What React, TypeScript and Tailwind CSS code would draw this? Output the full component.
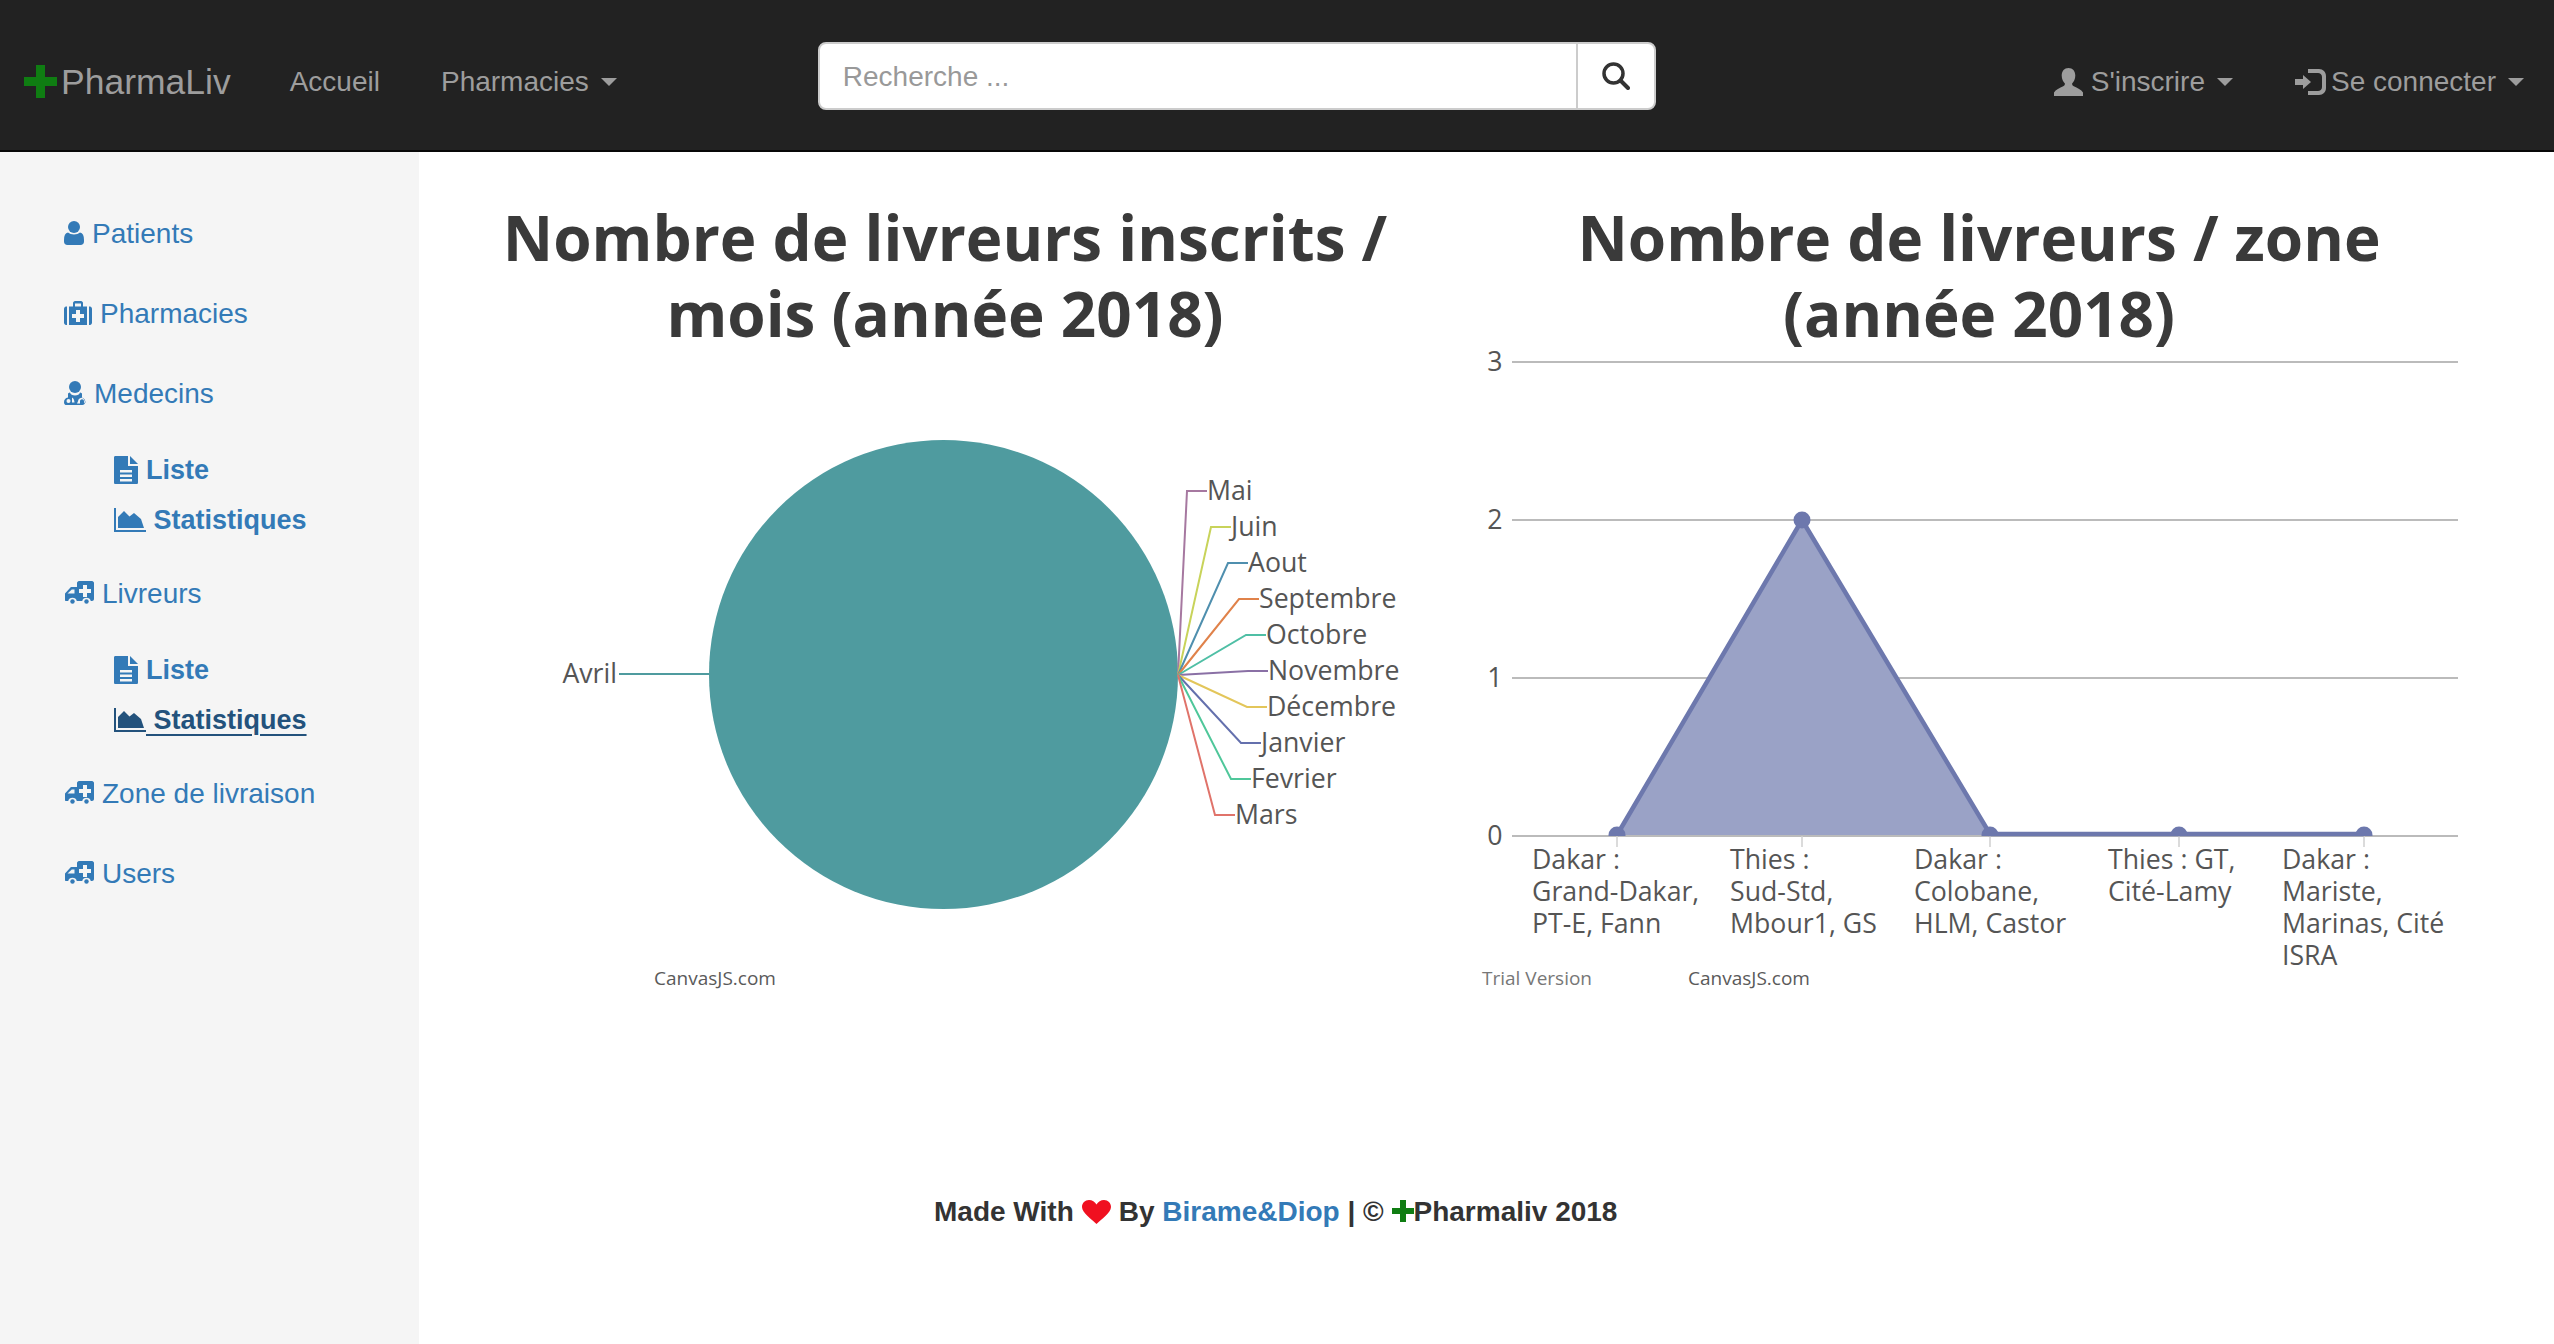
import React from "react";

const sans = "font-['Liberation_Sans',Arial,sans-serif]";
const chartFont = "'Open Sans', sans-serif";

const Caret = () => (
  <span className="ml-[12px] inline-block h-0 w-0 border-x-[8px] border-t-[8px] border-x-transparent border-t-[#9d9d9d]" />
);

const PlusIcon = ({ className }: { className: string }) => (
  <svg viewBox="0 0 33 33" className={className} fill="#0f7d12">
    <path d="M12 0h9v12h12v9H21v12h-9V21H0v-9h12z" />
  </svg>
);

const NavUserIcon = () => (
  <svg viewBox="0 0 29 28" className="h-[28px] w-[29px]" fill="#9d9d9d">
    <path d="M14.5 0c4.2 0 6.8 3 6.8 7.5 0 3.6-1.5 6.3-3.2 8 0 1.3.5 2.2 1.7 2.8 3.4 1.7 7.6 3.3 9.2 6.2V28H0v-3.500c1.600-2.900 5.800-4.500 9.200-6.200 1.200-.6 1.700-1.500 1.700-2.800-1.700-1.700-3.200-4.400-3.200-8C7.700 3 10.300 0 14.500 0z" />
  </svg>
);

const LoginIcon = () => (
  <svg viewBox="0 0 31 26" className="h-[26px] w-[31px]" fill="#9d9d9d">
    <path d="M8 6l8 7-8 7v-4H0v-6h8z" />
    <path d="M13 0h11c4 0 7 3 7 7v12c0 4-3 7-7 7H13v-4h10c2 0 4-1.500 4-4V8c0-2.500-2-4-4-4H13z" />
  </svg>
);

const SearchIcon = () => (
  <svg viewBox="0 0 28 28" className="h-[28px] w-[28px]" fill="none" stroke="#333">
    <circle cx="11.500" cy="11.500" r="9.500" strokeWidth="3.500" />
    <path d="M18.500 18.500L26 26" strokeWidth="4" strokeLinecap="round" />
  </svg>
);

const UserIcon = () => (
  <svg viewBox="0 0 20 24" className="h-[24px] w-[20px]" fill="currentColor">
    <circle cx="10" cy="6" r="6" />
    <path d="M4 11.500c1.500 1.300 3.600 2 6 2s4.500-.7 6-2c2.800.5 4 3 4 7.500v1.500c0 2-1.300 3.500-3.500 3.500h-13C1.300 24 0 22.500 0 20.500V19c0-4.500 1.200-7 4-7.500z" />
  </svg>
);

const MedkitIcon = () => (
  <svg viewBox="0 0 28 24" className="h-[24px] w-[28px]" fill="currentColor">
    <path d="M0 8c0-1.500 1-2.500 2-2.500h1V24H2c-1 0-2-1-2-2.500z" />
    <path d="M28 8c0-1.500-1-2.500-2-2.500h-1V24h1c1 0 2-1 2-2.500z" />
    <path
      fillRule="evenodd"
      d="M9 5.500V2c0-1 1-2 2-2h6c1 0 2 1 2 2v3.500h4V24H5V5.500zM11 2.500v3h6v-3zM12 9v4H8v4h4v4h4v-4h4v-4h-4V9z"
    />
  </svg>
);

const DoctorIcon = () => (
  <svg viewBox="0 0 22 24" className="h-[24px] w-[22px]" fill="currentColor">
    <circle cx="11" cy="6" r="6" />
    <path
      fillRule="evenodd"
      d="M4 12.500c.8-.6 1.500-.9 2-1 .4 2 2.500 3 5 3s4.600-1 5-3c.5.1 1.200.4 2 1v4.200c1.800 1 3 2.600 3 4.800 0 1.500-1.200 2.500-2.500 2.500h-17C1.200 24 0 23 0 21.500c0-2.800 1.200-4.500 4-5zM4.500 18a2 2 0 100 4 2 2 0 000-4zM13 22.500h3v-2.300c0-1 .6-2 2-2s2 1 2 2v1.500h1.500c0-2.500-1.500-5-3.500-5s-3.800 1.500-4 3.500zM8 16.500v5h2.500c-.2-2.500-.8-4-2.500-5z"
    />
  </svg>
);

const AmbulanceIcon = () => (
  <svg viewBox="0 0 29 24" className="ml-px h-[24px] w-[29px]" fill="currentColor">
    <path
      fillRule="evenodd"
      d="M12 2c0-1 1-2 2-2h13c1 0 2 1 2 2v16c0 1-1 2-2 2h-1.200a4.500 4.500 0 00-8.600 0H11.800a4.500 4.500 0 00-8.600 0H1c-.6 0-1-.4-1-1v-6.500L5 7c.5-.6 1-1 2-1h5zM18 4v4h-4v4h4v4h4v-4h4V8h-4V4zM9.500 8.500H6.800L2.500 12.500h7z"
    />
    <circle cx="7.500" cy="20.500" r="2.200" />
    <circle cx="21.500" cy="20.500" r="2.200" />
  </svg>
);

const FileIcon = () => (
  <svg viewBox="0 0 24 28" className="h-[28px] w-[24px]" fill="currentColor">
    <path d="M16 0l8 8h-8z" />
    <path
      fillRule="evenodd"
      d="M1.500 0H14v10h10v16.500c0 1-.6 1.500-1.500 1.500h-21C.6 28 0 27.500 0 26.500v-25C0 .5.600 0 1.500 0zM6 14v2.500h12V14zM6 18.500V21h12v-2.500zM6 23v2.500h12V23z"
    />
  </svg>
);

const AreaIcon = () => (
  <svg viewBox="0 0 32 24" className="h-[24px] w-[32px]" fill="currentColor">
    <path d="M0 0h2v22h30v2H0z" />
    <path d="M4 20V9l6-6 5.500 5.500L20 5l7 6 3 9z" />
  </svg>
);

const Heart = () => (
  <svg viewBox="0 0 29 24" className="mx-[8px] inline-block h-[24px] w-[29px] align-[-3px]" fill="#f01020">
    <path d="M14.500 24C10 19.500 0 13 0 7c0-4 3-7 7-7 3.200 0 6 2 7.500 4.500C16 2 18.800 0 22 0c4 0 7 3 7 7 0 6-10 12.500-14.500 17z" />
  </svg>
);

function NavLink({
  icon,
  label,
  marginLeft,
}: {
  icon?: React.ReactNode;
  label: string;
  marginLeft: string;
}) {
  return (
    <span className={`mt-[14px] flex items-center text-[28px] leading-[40px] text-[#9d9d9d] ${marginLeft}`}>
      {icon}
      {label}
      {label !== "Accueil" ? <Caret /> : null}
    </span>
  );
}

function SideItem({ icon, label }: { icon: React.ReactNode; label: string }) {
  return (
    <li className="flex items-center gap-[8px] py-[20px] text-[28px] leading-[40px] text-[#337ab7]">
      <span className="-mt-[2px] flex w-auto">{icon}</span>
      {label}
    </li>
  );
}

function SubMenu({ active }: { active?: boolean }) {
  return (
    <ul className="mt-[16px] mb-[14px] ml-[50px] flex flex-col gap-[10px] text-[27px] font-bold leading-[40px] text-[#337ab7]">
      <li className="flex items-center gap-[8px]">
        <FileIcon />
        Liste
      </li>
      <li
        className={
          active
            ? "flex w-fit items-center text-[#23527c] underline decoration-2 underline-offset-[5px]"
            : "flex w-fit items-center"
        }
      >
        <AreaIcon />
        <span className="whitespace-pre"> Statistiques</span>
      </li>
    </ul>
  );
}

const pieLabels = [
  { name: "Mai", color: "#a678a0", knee: 1187, y: 491 },
  { name: "Juin", color: "#c8d35a", knee: 1211, y: 527 },
  { name: "Aout", color: "#4f8fae", knee: 1228, y: 563 },
  { name: "Septembre", color: "#e0824a", knee: 1239, y: 599 },
  { name: "Octobre", color: "#4fbfa5", knee: 1246, y: 635 },
  { name: "Novembre", color: "#8a70a5", knee: 1248, y: 671 },
  { name: "Décembre", color: "#e3c65a", knee: 1247, y: 707 },
  { name: "Janvier", color: "#6470ad", knee: 1241, y: 743 },
  { name: "Fevrier", color: "#4fc79a", knee: 1231, y: 779 },
  { name: "Mars", color: "#e0736a", knee: 1215, y: 815 },
];

// svg sits at page x=428, y=350
function PieChart() {
  return (
    <svg width="1034" height="660" viewBox="428 350 1034 660" style={{ fontFamily: chartFont }}>
      <circle cx="943.500" cy="674.500" r="234.500" fill="#4f9b9f" />
      <path d="M619 674H709" stroke="#4f9b9f" strokeWidth="2" fill="none" />
      <text x="617" y="683" fontSize="26.700" fontWeight="500" textAnchor="end" fill="#555">
        Avril
      </text>
      {pieLabels.map((l) => (
        <g key={l.name}>
          <path
            d={`M1178 675L${l.knee} ${l.y}H${l.knee + 20}`}
            stroke={l.color}
            strokeWidth="2"
            fill="none"
          />
          <text x={l.knee + 20} y={l.y + 9} fontSize="26.700" fontWeight="500" fill="#555">
            {l.name}
          </text>
        </g>
      ))}
      <text x="654" y="985" fontSize="19" fill="#5a5a5a">
        CanvasJS.com
      </text>
    </svg>
  );
}

const zones = [
  { x: 1617, labelX: 1532, lines: ["Dakar :", "Grand-Dakar,", "PT-E, Fann"] },
  { x: 1802, labelX: 1730, lines: ["Thies :", "Sud-Std,", "Mbour1, GS"] },
  { x: 1990, labelX: 1914, lines: ["Dakar :", "Colobane,", "HLM, Castor"] },
  { x: 2179, labelX: 2108, lines: ["Thies : GT,", "Cité-Lamy"] },
  { x: 2364, labelX: 2282, lines: ["Dakar :", "Mariste,", "Marinas, Cité", "ISRA"] },
];

// svg sits at page x=1462, y=350
function AreaChart() {
  const grid = [
    { v: "3", y: 362 },
    { v: "2", y: 520 },
    { v: "1", y: 678 },
    { v: "0", y: 836 },
  ];
  return (
    <svg width="1034" height="660" viewBox="1462 350 1034 660" style={{ fontFamily: chartFont }}>
      {grid.map((g) => (
        <g key={g.v}>
          <path d={`M1512 ${g.y}H2458`} stroke="#bbbbbb" strokeWidth="2" />
          <text x="1495" y={g.y + 9} fontSize="26.700" fontWeight="500" textAnchor="middle" fill="#555">
            {g.v}
          </text>
        </g>
      ))}
      {zones.map((z) => (
        <path key={z.x} d={`M${z.x} 836V847`} stroke="#cfcfcf" strokeWidth="1.500" />
      ))}
      <path d="M1617 835L1802 520L1990 835z" fill="#9aa2c6" />
      <path
        d="M1617 835L1802 520L1990 834H2364"
        fill="none"
        stroke="#6d78ad"
        strokeWidth="4.500"
      />
      <clipPath id="plot">
        <rect x="1512" y="350" width="946" height="486" />
      </clipPath>
      <g clipPath="url(#plot)" fill="#6d78ad">
        <circle cx="1617" cy="835" r="8.500" />
        <circle cx="1802" cy="520" r="8.500" />
        <circle cx="1990" cy="835" r="8.500" />
        <circle cx="2179" cy="835" r="8.500" />
        <circle cx="2364" cy="835" r="8.500" />
      </g>
      {zones.map((z) =>
        z.lines.map((line, i) => (
          <text key={line} x={z.labelX} y={869 + i * 32} fontSize="26.700" fontWeight="500" fill="#555">
            {line}
          </text>
        ))
      )}
      <text x="1482" y="985" fontSize="19" fill="#777">
        Trial Version
      </text>
      <text x="1688" y="985" fontSize="19" fill="#5a5a5a">
        CanvasJS.com
      </text>
    </svg>
  );
}

export default function App() {
  return (
    <div className={`flex min-h-screen flex-col bg-white ${sans}`}>
      <header className="flex h-[152px] items-center border-b-2 border-[#080808] bg-[#222222] pl-[24px]">
        <span className="mt-[14px] flex items-center text-[35.5px] leading-[40px] text-[#9d9d9d]">
          <PlusIcon className="-mt-[2px] mr-[4px] h-[33px] w-[33px]" />
          PharmaLiv
        </span>
        <NavLink label="Accueil" marginLeft="ml-[59px]" />
        <NavLink label="Pharmacies" marginLeft="ml-[61px]" />
        <div className="mt-[1px] ml-[201px] flex h-[68px] w-[838px] overflow-hidden rounded-[8px] border-2 border-[#cccccc] bg-white">
          <span className="flex-1 pl-[23px] text-[28px] leading-[65px] text-[#999999]">
            Recherche ...
          </span>
          <span className="flex w-[78px] items-center justify-center border-l-2 border-[#cccccc]">
            <SearchIcon />
          </span>
        </div>
        <NavLink
          icon={
            <span className="mr-[8px]">
              <NavUserIcon />
            </span>
          }
          label="S'inscrire"
          marginLeft="ml-auto"
        />
        <NavLink
          icon={
            <span className="mr-[5px]">
              <LoginIcon />
            </span>
          }
          label="Se connecter"
          marginLeft="ml-[62px] mr-[30px]"
        />
      </header>

      <div className="flex flex-1">
        <aside className="w-[419px] shrink-0 bg-[#f5f5f5] pt-[42px] pl-[64px]">
          <ul>
            <SideItem icon={<UserIcon />} label="Patients" />
            <SideItem icon={<MedkitIcon />} label="Pharmacies" />
            <SideItem icon={<DoctorIcon />} label="Medecins" />
            <SubMenu />
            <SideItem icon={<AmbulanceIcon />} label="Livreurs" />
            <SubMenu active />
            <SideItem icon={<AmbulanceIcon />} label="Zone de livraison" />
            <SideItem icon={<AmbulanceIcon />} label="Users" />
          </ul>
        </aside>

        <main className="flex-1 pl-[9px]">
          <div className="flex">
            {[
              { title: ["Nombre de livreurs inscrits /", "mois (année 2018)"], chart: <PieChart /> },
              { title: ["Nombre de livreurs / zone", "(année 2018)"], chart: <AreaChart /> },
            ].map((col) => (
              <section key={col.title[0]} className="w-[1034px]">
                <h2
                  className="pt-[47px] text-center text-[62px] font-bold leading-[76px] text-[#3a3a3a]"
                  style={{ fontFamily: chartFont }}
                >
                  {col.title[0]}
                  <br />
                  {col.title[1]}
                </h2>
                <div className="-mt-[1px]">{col.chart}</div>
              </section>
            ))}
          </div>
          <p className="mt-[182px] ml-[506px] text-[28px] font-bold leading-[40px] text-[#333333]">
            Made With
            <Heart />
            By <span className="text-[#337ab7]">Birame&amp;Diop</span> | ©{" "}
            <PlusIcon className="inline-block h-[22px] w-[22px] align-[-1px]" />
            Pharmaliv 2018
          </p>
        </main>
      </div>
    </div>
  );
}
